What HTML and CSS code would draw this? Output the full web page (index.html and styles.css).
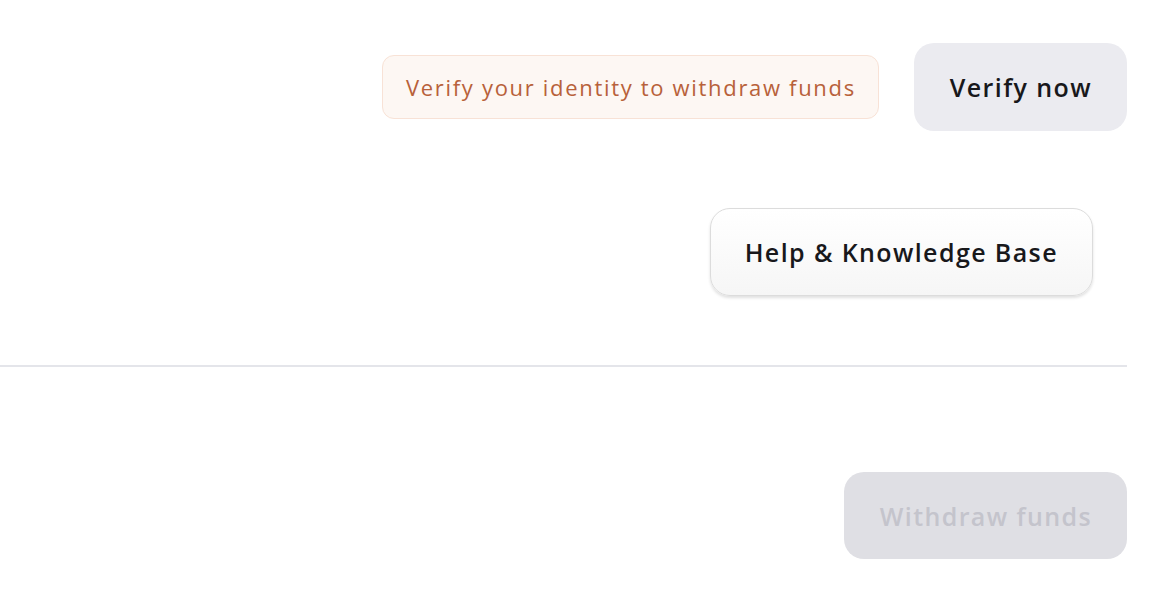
FILE: index.html
```html
<!DOCTYPE html>
<html lang="en">
<head>
    <meta charset="UTF-8">
    <meta name="viewport" content="width=device-width, initial-scale=1.0">
    <title>Withdraw</title>
    <link rel="stylesheet" href="styles.css">
</head>
<body>
    <div class="panel">
        <div class="verify-row">
            <div class="notice">Verify your identity to withdraw funds</div>
            <button class="btn btn-muted">Verify now</button>
        </div>

        <div class="help-row">
            <button class="btn btn-light">Help &amp; Knowledge Base</button>
        </div>

        <hr class="divider">

        <div class="withdraw-row">
            <button class="btn btn-disabled" disabled>Withdraw funds</button>
        </div>
    </div>
</body>
</html>
```

FILE: styles.css
```css
body {
    margin: 0;
    background: #fff;
    font-family: "Open Sans", Lato, sans-serif;
}

.panel {
    padding: 43px 35px 0 0;
}

.verify-row {
    display: flex;
    justify-content: flex-end;
    align-items: center;
    gap: 35px;
}

.notice {
    background: #fdf7f3;
    border: 1.5px solid #f8e2d6;
    color: #b8613a;
    border-radius: 12px;
    height: 62px;
    padding: 0 22px 0 23px;
    display: flex;
    align-items: center;
    font-size: 22px;
    letter-spacing: 1.68px;
}

.btn {
    font-family: inherit;
    font-size: 25px;
    font-weight: 600;
    letter-spacing: 1.4px;
    height: 88px;
    border-radius: 20px;
    border: none;
    padding: 0 35px 0 36px;
    cursor: pointer;
}

.btn-muted {
    background: #ebebf0;
    color: #18181b;
}

.help-row {
    display: flex;
    justify-content: flex-end;
    margin-top: 77px;
    padding-right: 34px;
}

.btn-light {
    background: linear-gradient(#ffffff, #f6f6f6);
    color: #18181b;
    border: 1.5px solid #dcdcdc;
    box-shadow: 0 2px 3px rgba(0,0,0,0.12);
    padding: 0 34px;
}

.divider {
    margin: 69px 0 0;
    border: none;
    border-top: 2px solid #e4e5ea;
}

.withdraw-row {
    display: flex;
    justify-content: flex-end;
    margin-top: 105px;
}

.btn-disabled {
    background: #dfdfe4;
    color: #c4c4cc;
    cursor: default;
    height: 87px;
}
```
